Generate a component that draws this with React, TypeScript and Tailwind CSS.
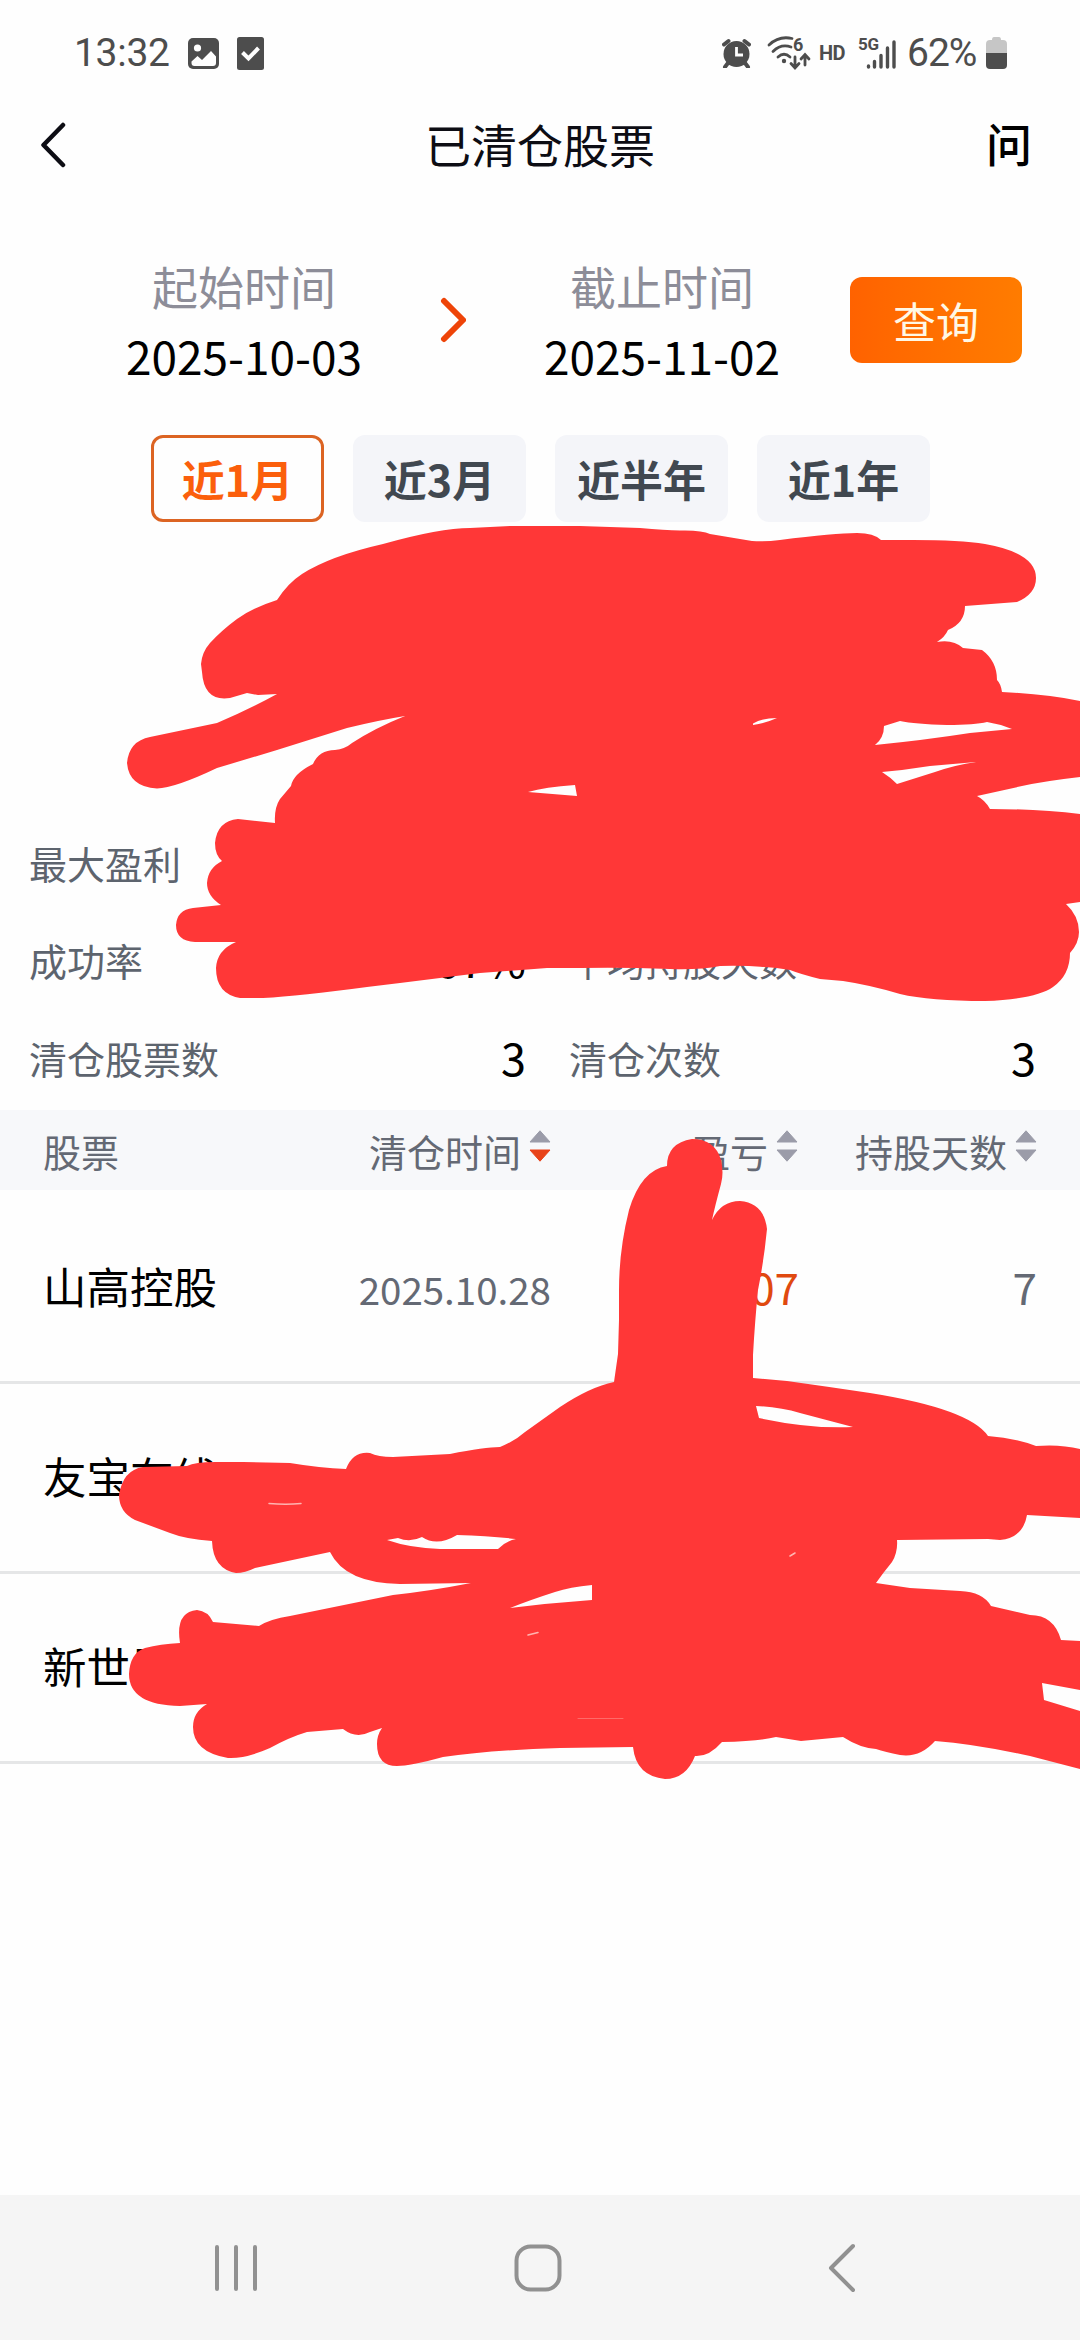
import React from "react"
import clsx from "clsx"

const ranges = ["近1月", "近3月", "近半年", "近1年"]

const stats = [
	[
		{ label: "最大盈利", value: "" },
		{ label: "", value: "" },
	],
	[
		{ label: "成功率", value: "66.67%" },
		{ label: "平均持股天数", value: "" },
	],
	[
		{ label: "清仓股票数", value: "3" },
		{ label: "清仓次数", value: "3" },
	],
]

const stocks = [
	{ name: "山高控股", date: "2025.10.28", profit: "07", days: "7" },
	{ name: "友宝在线", date: "", profit: "", days: "" },
	{ name: "新世界", date: "", profit: "", days: "" },
]

const StatusBar = () => (
	<div className="flex h-[106px] items-center justify-between pr-[73px] pl-[74px] font-['Roboto',sans-serif] text-[#4d4d4d]">
		<div className="flex items-center">
			<span className="w-[114px] text-[39px] leading-none tracking-[-0.3px]">13:32</span>
			<svg width="31" height="31" viewBox="0 0 31 31">
				<rect width="31" height="31" rx="5" fill="#4d4d4d" />
				<circle cx="9.5" cy="10" r="3.6" fill="#fefefe" />
				<path d="M3.5 23.5 9.5 18l4.5 4 9-9 5 5.5V25q0 3-3 3H6.500q-3 0-3-3z" fill="#fefefe" />
			</svg>
			<svg className="ml-[18px]" width="27" height="33" viewBox="0 0 27 33">
				<rect width="27" height="33" rx="2.500" fill="#4d4d4d" />
				<path d="m5.500 15.500 6 6L21.500 11" fill="none" stroke="#fefefe" strokeWidth="4" />
			</svg>
		</div>
		<div className="flex items-center">
			<svg width="29" height="30" viewBox="0 0 29 30">
				<circle cx="14.500" cy="16" r="13" fill="#4d4d4d" />
				<path d="M2 6.500 6.500 3M27 6.500 22.500 3M6 25l-3 4M23 25l3 4" stroke="#4d4d4d" strokeWidth="4" strokeLinecap="round" />
				<path d="M14.500 9v8h6.500" fill="none" stroke="#fefefe" strokeWidth="2.800" />
			</svg>
			<svg className="ml-[16px] overflow-visible" width="44" height="34" viewBox="0 0 44 34">
				<g fill="none" stroke="#4d4d4d" strokeWidth="2.800" strokeLinecap="round">
					<path d="M2 9q10-9.500 23-6.500M6 15.500q8-8 18-4.500M11 21q6-5.500 12 0" />
					<path d="M28 21v10m-4-3.500 4 4.500 4-4.500M38 29V19m-4 4 4-4.500 4 4.500" />
				</g>
				<circle cx="17" cy="25" r="2.200" fill="#4d4d4d" />
				<text x="26" y="15" fontSize="18" fontWeight="700" fill="#4d4d4d">6</text>
			</svg>
			<span className="ml-[8px] w-[27px] text-[20px] leading-none font-bold tracking-[-0.5px]">HD</span>
			<svg className="ml-[12px] overflow-visible" width="40" height="34" viewBox="0 0 40 34">
				<text x="0" y="14" fontSize="17" fontWeight="700" letterSpacing="-0.300" fill="#4d4d4d">5G</text>
				<path d="M10.500 30v1M16.500 25.500v5.500M23 19.500v11.500M29.500 12v19M36 6v25" stroke="#4d4d4d" strokeWidth="3.400" strokeLinecap="round" />
			</svg>
			<span className="ml-[9px] w-[76px] text-[39px] leading-none tracking-[-1px]">62%</span>
			<svg className="ml-[3px]" width="21" height="32" viewBox="0 0 21 32">
				<path d="M6 3q0-3 2-3h5q2 0 2 3h2q4 0 4 4v9H0V7q0-4 4-4z" fill="#c6c6c6" />
				<path d="M0 16h21v12q0 4-4 4H4q-4 0-4-4z" fill="#4d4d4d" />
			</svg>
		</div>
	</div>
)

const Header = () => (
	<header className="flex h-[78px] items-center justify-between pr-[48px] pl-[40px] text-[#0d0d14]">
		<svg width="46" height="46" viewBox="0 0 46 46">
			<path d="M23 3 3.500 23 23 43" fill="none" stroke="currentColor" strokeWidth="4.500" strokeLinecap="round" strokeLinejoin="round" />
		</svg>
		<h1 className="ml-[8px] pb-[4px] text-[46px] leading-none">已清仓股票</h1>
		<span className="pb-[7px] text-[46px] leading-none font-medium text-black">问</span>
	</header>
)

const DateField = ({ label, date }: { label: string; date: string }) => (
	<div className="flex w-[244px] flex-col items-center">
		<span className="h-[70px] text-[46px] leading-[70px] text-[#8d8d98]">{label}</span>
		<span className="h-[70px] text-[46px] leading-[70px] text-black">{date}</span>
	</div>
)

const SortIcon = ({ active }: { active?: boolean }) => (
	<svg className="mb-[9px] ml-[8px]" width="22" height="32" viewBox="0 0 22 32">
		<path d="M11 .8 21 12H1z" fill="#9b9ca9" stroke="#9b9ca9" strokeLinejoin="round" />
		<path d="M11 31.200 21 20H1z" fill={active ? "#e8431a" : "#9b9ca9"} stroke={active ? "#e8431a" : "#9b9ca9"} strokeLinejoin="round" />
	</svg>
)

// Freehand marker strokes laid over the private figures
const Scribble = () => (
	<svg className="pointer-events-none absolute top-0 left-0" width="1080" height="2340" viewBox="0 0 1080 2340">
		<g fill="#ff3737" fillRule="evenodd">
			<path
				d="M201 664Q202 652 210 643Q222 630 237 619Q252 608 277 600Q288 583 302 574Q330 556 383 544Q440 528 470 528L510 526L580 526L640 528Q665 530 680 530.500Q702 530 710 534L752 541Q765 542 780 540Q835 533 857 533Q874 533 881 540L913 540Q960 540 985 544Q1036 553 1036 578Q1036 594 1017 602L965 606Q965 623 948 630Q945 637 937 642Q953 639 963 648L982 650Q997 661 997 680Q1001 684 1002 692Q1047 694 1080 701V777Q1045 781 1022 786L977 796Q985 800 990 809Q1040 809 1080 814V902L1066 904Q1079 916 1079 932Q1079 943 1070 953Q1070 975 1053 987Q1036 999 985 1001Q930 1001 900 994Q870 985 843 981L820 979Q800 974 790 970Q760 965 720 966Q700 970 670 969Q620 967 580 968L547 968L480 973L400 983L367 987Q300 996 263 998H240Q216 994 216 968Q217 950 236 942H195Q176 941 176 925Q177 910 193 908L221 905Q207 896 207 883Q208 868 222 861Q215 855 215 843Q217 821 238 819L275 823Q274 808 280 799L291 786Q293 774 313 764Q319 750 335 750Q345 749 352 743Q375 728 405 716Q380 720 347 728L277 750L217 768Q175 788 157 788.500Q129 787 127 763Q129 741 150 737L217 723Q248 710 277 694L258 695L247 693L230 698Q204 702 202 672Z
				M528 792Q545 787 575 785L577 796Z
				M753 723.500Q762 718 777 718Q766 723 753 725Z
				M875 745Q884 738 884 726L900 721Q915 724 947 725Q975 725 987 722Q1000 724 1012 729L970 733Q925 740 875 745Z
				M882 772Q905 770 930 766L976 762Q955 765 935 772L897 784Q890 777 882 772Z"
			/>
			<path
				d="M614 1382L618 1354L619 1320L619 1290Q619 1250 629 1210Q641 1170 667 1166Q667 1143 692 1139Q715 1139 721 1160Q724 1173 721 1184Q715 1206 712 1220Q721 1201 740 1201Q764 1203 767 1229Q764 1260 758 1290Q755 1320 753 1355V1378L787 1381Q830 1387 870 1393Q970 1409 988 1436Q1015 1438 1036 1446Q1060 1444 1080 1449V1518L1027 1515Q1023 1538 1000 1540L988 1539L897 1540Q898 1552 892 1562Q883 1573 876 1583L910 1588L960 1591Q983 1592 991 1606L1030 1615Q1054 1615 1061 1640L1080 1641V1690L1042 1683L1044 1700L1080 1711V1769L1030 1756Q975 1744 935 1741Q920 1758 900 1755Q885 1752 876 1749Q860 1748 843 1737L801 1741L776 1737Q760 1741 722 1742Q709 1757 695 1756Q686 1779 665 1779Q636 1776 633 1747L560 1748Q490 1750 443 1757Q410 1766 397 1766Q377 1766 377 1744Q377 1735 382 1728L370 1732Q356 1739 343 1729L307 1732Q290 1737 270 1748Q245 1759 228 1758Q193 1752 193 1727Q193 1712 207 1704L180 1706Q129 1705 129 1674Q130 1653 145 1648Q160 1644 180 1643Q175 1612 197 1610Q208 1611 213 1622L259 1626Q270 1619 290 1616L393 1595Q430 1591 471 1583L400 1584Q345 1583 330 1552L255 1568Q245 1573 236 1573Q213 1569 212 1541Q185 1539 170 1533L135 1520Q119 1512 119 1495Q123 1470 143 1467L187 1466Q195 1462 215 1462L243 1462L290 1463Q320 1468 346 1469Q353 1451 370 1453Q378 1457 393 1457L450 1454Q485 1447 500 1447Q515 1441 525 1432L560 1407Q590 1387 614 1382Z
				M387 1540L398 1538Q410 1543 422 1537Q437 1547 457 1535Q490 1536 516 1539Q506 1541 498 1549H440Q410 1548 387 1540Z
				M510 1608Q530 1600 555 1592Q570 1587 592 1585V1600Q550 1603 510 1608Z
				M756 1406Q780 1407 800 1413L853 1427Q810 1429 759 1418Z"
			/>
		</g>
		<g fill="none" stroke="#ffb4b0" strokeWidth="1.500" strokeLinecap="round">
			<path d="M269 1503.500Q286 1505 301 1503.500M528 1635 538 1632.500M790 1556 795 1553" />
			<path d="M578 1718.500h45" stroke="#ff6a68" strokeWidth="1" />
		</g>
	</svg>
)

const App = () => {
	const [active, setActive] = React.useState(0)

	return (
		<div className="relative flex h-[2340px] w-[1080px] flex-col overflow-hidden bg-[#fefefe] font-['Noto_Sans_CJK_SC',sans-serif]">
			<StatusBar />
			<Header />

			{/* Date range */}
			<section className="mt-[66px] flex h-[140px] items-center pl-[122px]">
				<DateField label="起始时间" date="2025-10-03" />
				<svg className="mx-[74px]" width="26" height="46" viewBox="0 0 26 46">
					<path d="m4 4 19 19L4 42" fill="none" stroke="#ee4408" strokeWidth="6" strokeLinecap="round" strokeLinejoin="round" />
				</svg>
				<DateField label="截止时间" date="2025-11-02" />
				<button className="ml-[66px] h-[86px] w-[172px] rounded-xl bg-linear-to-r from-[#ff6200] to-[#ff7c00] text-[43px] leading-none text-[#fff8e6]">
					查询
				</button>
			</section>

			{/* Quick ranges */}
			<div className="mt-[45px] flex gap-[29px] pl-[151px]">
				{ranges.map((range, index) => (
					<button
						key={range}
						onClick={() => setActive(index)}
						className={clsx(
							"h-[87px] w-[173px] rounded-xl text-[43px] leading-none font-bold",
							index === active
								? "border-3 border-[#dc6423] text-[#fb5f0c]"
								: "bg-[#f4f5f9] text-[#414850]"
						)}>
						{range}
					</button>
				))}
			</div>

			{/* Summary */}
			<section className="mt-[292px] flex flex-col pr-[44px] pl-[29px]">
				{stats.map((row, index) => (
					<div key={index} className="flex h-[97.5px] items-center gap-[44px]">
						{row.map((item, i) => (
							<div
								key={i}
								className={clsx("flex items-center justify-between", i === 0 ? "w-[497px]" : "flex-1 -ml-px")}>
								<span className="text-[38px] leading-none text-[#5d646e]">{item.label}</span>
								<span className="pb-[3px] text-[45px] leading-none text-black">{item.value}</span>
							</div>
						))}
					</div>
				))}
			</section>

			{/* Table */}
			<div className="mt-[3px] flex h-[80px] items-center bg-[#f7f8fa] pt-[2px] pr-[43px] pl-[43px] text-[38px] leading-none text-[#646974]">
				<span className="w-[200px]">股票</span>
				<span className="flex w-[308px] items-center justify-end">
					清仓时间
					<SortIcon active />
				</span>
				<span className="flex w-[247px] items-center justify-end">
					盈亏
					<SortIcon />
				</span>
				<span className="flex flex-1 items-center justify-end">
					持股天数
					<SortIcon />
				</span>
			</div>
			<div className="pt-[4px]">
				{stocks.map((stock) => (
					<div
						key={stock.name}
						className="flex h-[190px] items-center border-b-3 border-[#e5e6e7] pr-[43px] pl-[43px] leading-none">
						<span className="w-[200px] pb-[2px] text-[43.5px] text-black">{stock.name}</span>
						<span className="w-[308px] pt-[2px] text-right text-[38.5px] text-[#646974]">{stock.date}</span>
						<span className="w-[248px] pb-[2px] text-right text-[44px] text-[#e0490f]">{stock.profit}</span>
						<span className="flex-1 pb-[2px] text-right text-[44px] text-[#646974]">{stock.days}</span>
					</div>
				))}
			</div>

			{/* System navigation */}
			<nav className="mt-auto flex h-[145px] items-center justify-between bg-[#f5f5f5] pr-[222px] pl-[212px] text-[#919191]">
				<svg width="48" height="50" viewBox="0 0 48 50">
					<path d="M5 4v42M24 4v42M43 4v42" stroke="currentColor" strokeWidth="4" strokeLinecap="round" />
				</svg>
				<svg className="ml-[-10px]" width="48" height="50" viewBox="0 0 48 50">
					<rect x="2.500" y="3.500" width="43" height="43" rx="14" fill="none" stroke="currentColor" strokeWidth="4" />
				</svg>
				<svg width="32" height="50" viewBox="0 0 32 50">
					<path d="M27 3 5 25l22 22" fill="none" stroke="currentColor" strokeWidth="4" strokeLinecap="round" strokeLinejoin="round" />
				</svg>
			</nav>

			<Scribble />
		</div>
	)
}

export default App
